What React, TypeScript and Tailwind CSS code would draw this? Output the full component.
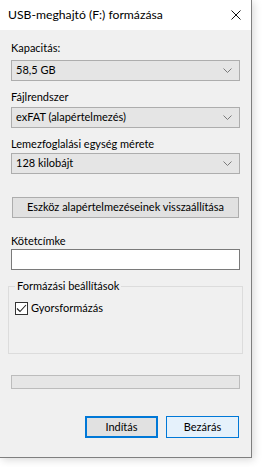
import React from 'react';

const Chevron = () => (
  <svg width="9" height="5" viewBox="0 0 9 5" className="shrink-0">
    <polyline points="0.5,0.5 4.5,4.5 8.5,0.5" fill="none" stroke="#7a7a7a" strokeWidth="1" />
  </svg>
);

const Combo: React.FC<{ value: string }> = ({ value }) => (
  <div className="h-[21px] mx-[11px] flex items-center justify-between bg-[#e5e5e5] border border-[#adadad] pl-[4px] pr-[7px]">
    <span>{value}</span>
    <Chevron />
  </div>
);

const Label: React.FC<{ text: string; className?: string }> = ({ text, className }) => (
  <div className={`h-[16px] leading-[16px] mx-[11px] ${className ?? ''}`}>{text}</div>
);

export default function App() {
  return (
    <div className="w-[264px] h-[467px] bg-white font-['Lato',sans-serif] text-[11px] text-black whitespace-nowrap">
      <div className="w-[252px] h-[458px] flex flex-col bg-[#f0f0f0] border-r border-b border-[#7f7f7f] shadow-[2px_2px_8px_rgba(0,0,0,0.15)]">
        {/* Title bar */}
        <div className="h-[30px] bg-white flex items-center justify-between pl-[8px] pr-[10px] shrink-0">
          <span className="leading-none text-[12.2px]">USB-meghajtó (F:) formázása</span>
          <svg width="10" height="10" viewBox="0 0 10 10">
            <path d="M0.5 0.5 L9.5 9.5 M9.5 0.5 L0.5 9.5" stroke="#111" strokeWidth="1" />
          </svg>
        </div>

        <Label text="Kapacitás:" className="mt-[10px]" />
        <div className="mt-[4px]"><Combo value="58,5 GB" /></div>

        <Label text="Fájlrendszer" className="mt-[8px]" />
        <div className="mt-[2px]"><Combo value="exFAT (alapértelmezés)" /></div>

        <Label text="Lemezfoglalási egység mérete" className="mt-[8px]" />
        <div className="mt-[1px]"><Combo value="128 kilobájt" /></div>

        {/* Restore defaults */}
        <div className="mt-[23px] mx-[12px] h-[21px] flex items-center justify-center bg-[#e1e1e1] border border-[#adadad]">
          Eszköz alapértelmezéseinek visszaállítása
        </div>

        <Label text="Kötetcímke" className="mt-[15px]" />
        <div className="mx-[11px] h-[21px] bg-white border border-[#7a7a7a]" />

        {/* Format options group */}
        <div className="mt-[16px] mx-[8px] h-[68px] border border-[#dcdcdc] relative">
          <span className="absolute -top-[9px] left-[6px] px-[2px] bg-[#f0f0f0] leading-[16px]">Formázási beállítások</span>
          <div className="mt-[13px] ml-[6px] flex items-center gap-[3px]">
            <div className="w-[13px] h-[13px] bg-white border border-[#333] flex items-center justify-center">
              <svg width="11" height="9" viewBox="0 0 11 9">
                <polyline points="1,4.5 4,7.5 10,1" fill="none" stroke="#222" strokeWidth="1.1" />
              </svg>
            </div>
            <span className="leading-[16px]">Gyorsformázás</span>
          </div>
        </div>

        {/* Progress */}
        <div className="mt-[21px] mx-[11px] h-[14px] bg-[#e6e6e6] border border-[#bcbcbc]" />

        {/* Buttons */}
        <div className="mt-[27px] flex justify-end gap-[8px] pr-[12px]">
          <div className="w-[73px] h-[22px] flex items-center justify-center bg-[#e1e1e1] border-2 border-[#0078d7]">Indítás</div>
          <div className="w-[73px] h-[22px] flex items-center justify-center bg-[#e5f1fb] border border-[#0078d7]">Bezárás</div>
        </div>
      </div>
    </div>
  );
}
